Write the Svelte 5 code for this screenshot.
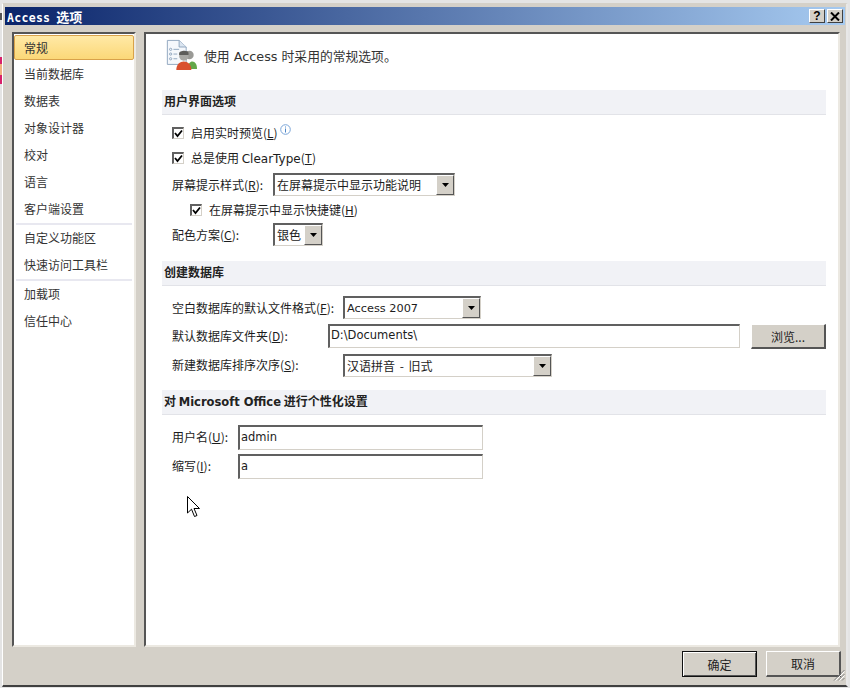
<script>
  const menuGroups = [
    ["常规", "当前数据库", "数据表", "对象设计器", "校对", "语言", "客户端设置"],
    ["自定义功能区", "快速访问工具栏"],
    ["加载项", "信任中心"],
  ];
</script>

{#snippet check()}
  <span class="checkbox">
    <svg width="9" height="9" viewBox="0 0 9 9"><path d="M1 4 L3.500 7 L8 1.500" fill="none" stroke="#000" stroke-width="1.800" /></svg>
  </span>
{/snippet}

{#snippet combo(text, width, latin = false)}
  <div class="combo" style="width: {width}px">
    <span class="comboText" class:lat={latin}>{text}</span>
    <span class="comboBtn"><svg width="7" height="4" viewBox="0 0 7 4"><path d="M0 0H7L3.500 4Z" fill="#000" /></svg></span>
  </div>
{/snippet}

<div class="screen">
  <div class="window">
    <div class="titlebar">
      <span class="title"><span class="titleLatin">Access</span> 选项</span>
      <div class="capButtons">
        <span class="capBtn">?</span>
        <span class="capBtn">
          <svg width="10" height="9" viewBox="0 0 10 9"><path d="M1 0.500 L9 8.500 M9 0.500 L1 8.500" stroke="#000" stroke-width="2" /></svg>
        </span>
      </div>
    </div>

    <div class="body">
      <nav class="sidebar">
        {#each menuGroups as group, g}
          {#if g > 0}<div class="menuSep"></div>{/if}
          {#each group as item}
            <div class="menuItem" class:active={item === "常规"}>{item}</div>
          {/each}
        {/each}
      </nav>

      <main class="panel">
        <div class="intro">
          <svg class="introIcon" width="32" height="32" viewBox="0 0 34 34">
            <path d="M2.500 1.500H15L22.500 8.500V27H2.500Z" fill="#f5f8fc" stroke="#8ea4bd" />
            <path d="M15 1.500V8.500H22.500" fill="#dbe5f0" stroke="#8ea4bd" />
            <g fill="none" stroke="#8ea4bd">
              <circle cx="6" cy="11" r="1.200" />
              <circle cx="6" cy="16" r="1.200" />
              <circle cx="6" cy="21" r="1.200" />
              <path d="M9 11H15M9 16H13M9 21H13" />
            </g>
            <circle cx="26" cy="17" r="4.500" fill="#9a9a96" />
            <circle cx="20" cy="18" r="5" fill="#a8a8a4" />
            <path d="M15 15C15 12 25 11 25 15V17H15Z" fill="#5d5d5a" />
            <path d="M24 32C24 26 27 24 29 24C32 24 34 27 34 32Z" fill="#64a84a" />
            <path d="M12 33C12 27 16 24 20 24C24 24 28 27 28 33Z" fill="#d9502e" />
          </svg>
          <span class="introText">使用 Access 时采用的常规选项。</span>
        </div>

        <section>
          <h2>用户界面选项</h2>
          <div class="row check first">{@render check()}<span>启用实时预览(<u>L</u>)</span>
            <svg class="info" width="11" height="11" viewBox="0 0 11 11"><circle cx="5.500" cy="5.500" r="4.800" fill="#fff" stroke="#7aa5d8" /><path d="M5.500 2.500V3.500M5.500 4.500V8.500" stroke="#4d86c8" /></svg>
          </div>
          <div class="row check second">{@render check()}<span>总是使用 <span class="lat12">ClearType</span>(<u>T</u>)</span></div>
          <div class="row third">
            <label class="w101">屏幕提示样式(<u>R</u>):</label>
            {@render combo("在屏幕提示中显示功能说明", 182)}
          </div>
          <div class="row check nested">{@render check()}<span>在屏幕提示中显示快捷键(<u>H</u>)</span></div>
          <div class="row fifth">
            <label class="w101">配色方案(<u>C</u>):</label>
            {@render combo("银色", 50)}
          </div>
        </section>

        <section class="db">
          <h2>创建数据库</h2>
          <div class="row dbFirst">
            <label class="w171">空白数据库的默认文件格式(<u>F</u>):</label>
            {@render combo("Access 2007", 138, true)}
          </div>
          <div class="row dbSecond">
            <label class="w156">默认数据库文件夹(<u>D</u>):</label>
            <div class="textbox folder">D:\Documents\</div>
            <button class="browse">浏览...</button>
          </div>
          <div class="row dbThird raised">
            <label class="w171">新建数据库排序次序(<u>S</u>):</label>
            {@render combo("汉语拼音 - 旧式", 209)}
          </div>
        </section>

        <section class="personal">
          <h2>对 <span class="h2Latin">Microsoft Office</span> 进行个性化设置</h2>
          <div class="row userRow raised">
            <label class="w66">用户名(<u>U</u>):</label>
            <div class="textbox user">admin</div>
          </div>
          <div class="row initRow raised">
            <label class="w66">缩写(<u>I</u>):</label>
            <div class="textbox user">a</div>
          </div>
        </section>

        <svg class="cursor" width="14" height="22" viewBox="0 0 14 22">
          <path d="M0.500 0.500V17L4.500 13.200L7.500 20.500L10 19.500L7 12.500H12.500Z" fill="#fff" stroke="#000" />
        </svg>
      </main>
    </div>

    <div class="footer">
      <button class="dlgBtn default">确定</button>
      <button class="dlgBtn">取消</button>
      <svg class="grip" width="12" height="12" viewBox="0 0 12 12">
        <path d="M11.500 1L1 11.500M11.500 5L5 11.500M11.500 9L9 11.500" stroke="#808080" />
        <path d="M11.500 2.500L2.500 11.500M11.500 6.500L6.500 11.500" stroke="#fff" />
      </svg>
    </div>
  </div>
</div>

<style>
  :global(body) {
    margin: 0;
    background: #e6e6e6;
  }

  .screen {
    width: 850px;
    height: 688px;
    overflow: hidden;
    padding: 3px 0 0 2px;
    box-sizing: border-box;
    /* bits of the window behind, on the left edge */
    background-color: #e4e4e4;
    background-image: linear-gradient(180deg,
      #e4e4e4 0 13px, #555 13px 20px, #e4e4e4 20px 57px,
      #d8206a 57px 64px, #f0b080 64px 75px, #d8206a 75px 84px, #e4e4e4 84px);
    background-size: 2px 100%;
    background-repeat: no-repeat;
  }

  .window {
    width: 846px;
    height: 684px;
    box-sizing: border-box;
    background: #d4d0c8;
    border-top: 1px solid #d4d0c8;
    border-left: 1px solid #fff;
    border-right: 2px solid #e8e8e8;
    border-bottom: 2px solid #404040;
    padding: 3px 1px 0 2px;
    display: flex;
    flex-direction: column;
    font-family: "Noto Sans CJK SC", sans-serif;
    font-size: 12px;
    color: #1c1c1c;
  }

  .titlebar {
    height: 18px;
    flex: none;
    display: flex;
    align-items: center;
    justify-content: space-between;
    padding: 0 2px;
    background: linear-gradient(90deg, #0a246a, #a6caf0);
    color: #fff;
  }

  .title {
    font-weight: 700;
    font-size: 13px;
  }

  .titleLatin {
    font-family: "DejaVu Sans Mono", monospace;
    font-size: 11.500px;
    letter-spacing: 0.300px;
    margin-right: 3px;
  }

  .capButtons {
    display: flex;
    gap: 2px;
  }

  .capBtn {
    width: 16px;
    height: 14px;
    box-sizing: border-box;
    background: #d4d0c8;
    border-top: 1px solid #fff;
    border-left: 1px solid #fff;
    border-right: 1px solid #404040;
    border-bottom: 1px solid #404040;
    display: flex;
    align-items: center;
    justify-content: center;
    color: #000;
    font: 700 12px "Liberation Sans", sans-serif;
  }

  .body {
    flex: none;
    display: flex;
    gap: 8px;
    padding: 7px 6px 0 7px;
  }

  .sidebar,
  .panel {
    height: 615px;
    box-sizing: border-box;
    background: #fff;
    border-top: 2px solid #555;
    border-left: 2px solid #555;
    border-right: 2px solid #ece9e2;
    border-bottom: 2px solid #ece9e2;
  }

  .sidebar {
    width: 124px;
    flex: none;
    padding-top: 1px;
  }

  .menuItem {
    height: 27px;
    line-height: 25px;
    padding-left: 10px;
    color: #333;
    box-sizing: border-box;
  }

  .menuItem.active {
    height: 25px;
    margin-bottom: 1px;
    line-height: 23px;
    background: linear-gradient(180deg, #ffe9a6, #fbd878);
    border: 1px solid #d8a24a;
    border-radius: 2px;
    padding-left: 9px;
  }

  .menuSep {
    height: 2px;
    margin: 0 2px;
    background: #e8e8f0;
  }

  .panel {
    width: 696px;
    flex: none;
    padding: 6px 12px 0 16px;
    position: relative;
  }

  .intro {
    display: flex;
    align-items: flex-start;
    gap: 7px;
    height: 34px;
    padding-left: 3px;
    margin-bottom: 16px;
    color: #333;
  }

  .introIcon {
    flex: none;
    margin-top: -1px;
  }

  .introText {
    font-family: "DejaVu Sans", "Noto Sans CJK SC", sans-serif;
    font-size: 12.800px;
    line-height: 20px;
    margin-top: 7px;
  }

  h2 {
    margin: 0;
    height: 25px;
    line-height: 21px;
    padding-left: 2px;
    box-sizing: border-box;
    background: #f1f2f6;
    border-bottom: 1px solid #e2e3e8;
    font-size: 12px;
    font-weight: 700;
    color: #222;
  }

  .h2Latin {
    font-family: "DejaVu Sans", sans-serif;
    font-size: 11.500px;
  }

  .row {
    display: flex;
    align-items: center;
    padding-left: 10px;
  }

  .raised label {
    padding-bottom: 2px;
  }

  .lat12 {
    font-family: "DejaVu Sans", sans-serif;
  }

  label {
    flex: none;
  }

  .w66 { width: 66px; }
  .w101 { width: 101px; }
  .w156 { width: 156px; }
  .w171 { width: 171px; }

  .check {
    gap: 7px;
    height: 13px;
  }

  .first { margin-top: 11px; }
  .second { margin-top: 12px; }
  .third { margin-top: 9px; }
  .nested { margin-top: 7px; padding-left: 28px; }
  .fifth { margin-top: 7px; }

  .checkbox {
    width: 12px;
    height: 12px;
    flex: none;
    box-sizing: border-box;
    background: #fff;
    border-top: 2px solid #606060;
    border-left: 2px solid #606060;
    border-right: 1px solid #d4d0c8;
    border-bottom: 1px solid #d4d0c8;
    display: flex;
    align-items: center;
    justify-content: center;
  }

  .info {
    margin: -6px 0 0 -5px;
  }

  .combo {
    height: 23px;
    box-sizing: border-box;
    display: flex;
    align-items: stretch;
    background: #fff;
    border-top: 2px solid #606060;
    border-left: 2px solid #606060;
    border-right: 1px solid #d4d0c8;
    border-bottom: 1px solid #d4d0c8;
    flex: none;
  }

  .comboText {
    flex: 1;
    padding-left: 2px;
    line-height: 19px;
    white-space: nowrap;
    overflow: hidden;
    word-spacing: 2px;
  }

  .comboText.lat {
    font-family: "DejaVu Sans", sans-serif;
    font-size: 11.300px;
    line-height: 21px;
    word-spacing: 0;
  }

  .comboBtn {
    width: 18px;
    flex: none;
    box-sizing: border-box;
    background: #d4d0c8;
    border-top: 1px solid #fff;
    border-left: 1px solid #fff;
    border-right: 1px solid #555;
    border-bottom: 1px solid #555;
    display: flex;
    align-items: center;
    justify-content: center;
  }

  .db { margin-top: 15px; }
  .dbFirst { margin-top: 10px; }
  .dbSecond { margin-top: 5px; align-items: flex-start; }
  .dbSecond label { line-height: 23px; }
  .dbThird { margin-top: 5px; }

  .textbox {
    height: 24px;
    box-sizing: border-box;
    background: #fff;
    border-top: 2px solid #606060;
    border-left: 2px solid #606060;
    border-right: 1px solid #d4d0c8;
    border-bottom: 1px solid #d4d0c8;
    padding-left: 1px;
    line-height: 18px;
    flex: none;
    font-family: "DejaVu Sans", sans-serif;
    font-size: 11.500px;
  }

  .folder {
    width: 412px;
  }

  .browse {
    width: 75px;
    height: 25px;
    margin-left: 11px;
    padding: 0;
    box-sizing: border-box;
    background: #d4d0c8;
    border-top: 1px solid #fff;
    border-left: 1px solid #fff;
    border-right: 2px solid #555;
    border-bottom: 2px solid #555;
    font: 12px "Noto Sans CJK SC", sans-serif;
    color: #222;
  }

  .personal { margin-top: 13px; }
  .userRow { margin-top: 10px; }
  .initRow { margin-top: 4px; }

  .user {
    width: 245px;
    height: 25px;
    line-height: 21px;
  }

  .cursor {
    position: absolute;
    left: 41px;
    top: 462px;
  }

  .footer {
    flex: none;
    display: flex;
    justify-content: flex-end;
    gap: 9px;
    padding: 4px 4px 0 0;
    position: relative;
    height: 34px;
    box-sizing: border-box;
  }

  .dlgBtn {
    width: 75px;
    height: 26px;
    padding: 0;
    box-sizing: border-box;
    background: #d4d0c8;
    border-top: 1px solid #fff;
    border-left: 1px solid #fff;
    border-right: 2px solid #555;
    border-bottom: 2px solid #555;
    font: 12px "Noto Sans CJK SC", sans-serif;
    color: #222;
  }

  .default {
    border: 1px solid #111;
    box-shadow: inset 1px 1px 0 #fff, inset -1px -1px 0 #555;
  }

  .grip {
    position: absolute;
    right: 0;
    bottom: 0;
  }
</style>
